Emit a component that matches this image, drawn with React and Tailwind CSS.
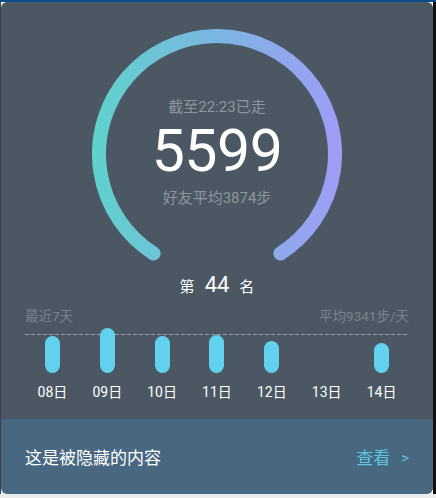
import React from "react";

const days = [
  { label: "08日", h: 37 },
  { label: "09日", h: 45 },
  { label: "10日", h: 37 },
  { label: "11日", h: 38 },
  { label: "12日", h: 32 },
  { label: "13日", h: 0 },
  { label: "14日", h: 30 },
];

function Gauge() {
  // ~295° arc, gap at the bottom
  return (
    <svg className="absolute inset-0" width="250" height="250" viewBox="0 0 250 250">
      <defs>
        <linearGradient id="arc" x1="0" y1="0" x2="250" y2="0" gradientUnits="userSpaceOnUse">
          <stop offset="0" stopColor="#5fd2cb" />
          <stop offset="0.5" stopColor="#7bb6e2" />
          <stop offset="1" stopColor="#a09cf6" />
        </linearGradient>
      </defs>
      <path
        d="M 61.6 224.5 A 118 118 0 1 1 188.4 224.5"
        fill="none"
        stroke="url(#arc)"
        strokeWidth="14"
        strokeLinecap="round"
      />
    </svg>
  );
}

export default function App() {
  return (
    <div
      className="flex h-[498px] w-[436px] flex-col bg-white"
      style={{ fontFamily: 'Roboto, "Noto Sans CJK SC", sans-serif' }}
    >
      <div className="h-[2px] bg-[#0b4b8b]" />
      <div className="flex h-[492px]">
        <div className="w-[1px] bg-[#3c4249]" />
        <div className="flex w-[432px] flex-col overflow-hidden rounded-[6px]">
          <section className="flex h-[417px] flex-col bg-[#4b5864]">
            <div className="relative mx-auto mt-[27px] flex h-[244px] w-[250px] flex-col items-center">
              <Gauge />
              <p className="relative mt-[68px] text-[15px] leading-[20px] text-[#8c969e]">截至22:23已走</p>
              <p className="relative mt-[4px] text-[59px] leading-[60px] tracking-[-0.5px] text-white">5599</p>
              <p className="relative mt-[7px] text-[15px] leading-[20px] text-[#8c969e]">好友平均3874步</p>
            </div>
            <div className="flex h-[24px] items-baseline justify-center gap-[10px] text-white">
              <span className="text-[15px]">第</span>
              <span className="text-[22px] leading-[24px]">44</span>
              <span className="text-[15px]">名</span>
            </div>
            <div className="mt-[10px] px-[24px]">
              <div className="flex h-[18px] items-center justify-between text-[13.5px] leading-[18px] text-[#78848d]">
                <span>最近7天</span>
                <span>平均9341步/天</span>
              </div>
              <div className="relative grid h-[48px] grid-cols-7 items-end">
                <div className="absolute left-0 right-0 top-[9px] h-[1px] bg-[repeating-linear-gradient(90deg,#97a1a9_0_4px,transparent_4px_6px)]" />
                {days.map((d) => (
                  <div key={d.label} className="relative flex justify-center">
                    {d.h > 0 && (
                      <div className="w-[15px] rounded-full bg-[#62d0ef]" style={{ height: d.h }} />
                    )}
                  </div>
                ))}
              </div>
              <div className="mt-[10px] grid grid-cols-7 text-center text-[14px] leading-[18px] text-white">
                {days.map((d) => (
                  <span key={d.label}>{d.label}</span>
                ))}
              </div>
            </div>
          </section>
          <section className="flex flex-1 items-center justify-between bg-[#486780] px-[24px] pt-[4px]">
            <span className="text-[17px] text-white">这是被隐藏的内容</span>
            <span className="flex items-center gap-[11px] text-[17px] text-[#5dc6e2]">
              查看<span className="text-[15px]">&gt;</span>
            </span>
          </section>
        </div>
        <div className="w-[3px] bg-[#111]" />
      </div>
      <div className="flex-1 bg-[#ececec]" />
    </div>
  );
}
